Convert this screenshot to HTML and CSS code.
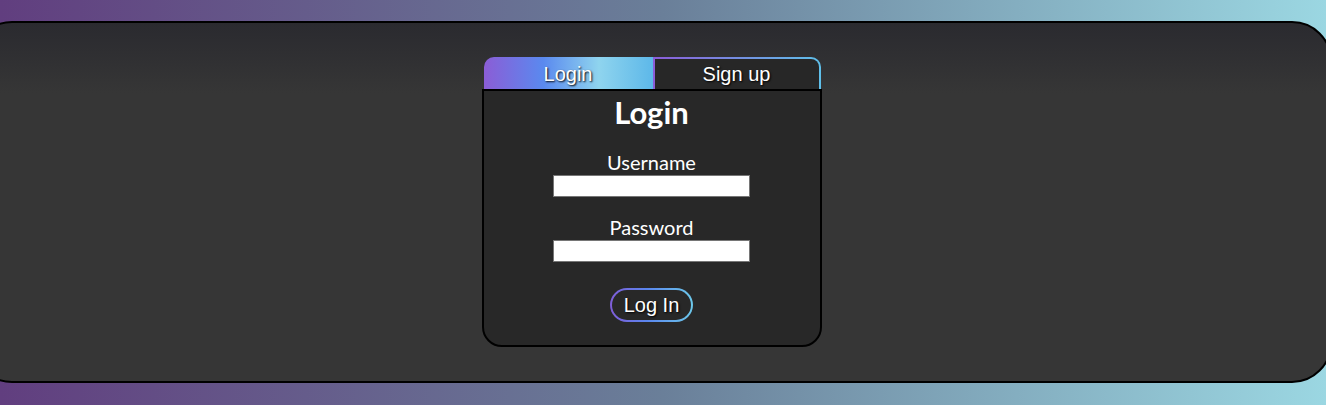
FILE: index.html
```html
<!DOCTYPE html>
<html lang="en">
<head>
    <meta charset="UTF-8">
    <meta name="viewport" content="width=device-width, initial-scale=1.0">
    <title>Login</title>
    <link rel="stylesheet" href="styles.css">
</head>
<body>
    <div class="page">
        <div class="auth">
            <div class="tabs">
                <button class="tab tab-active">Login</button>
                <button class="tab tab-other">Sign up</button>
            </div>
            <form class="card">
                <h1>Login</h1>
                <label for="username">Username</label>
                <input type="text" id="username">
                <label for="password" class="second">Password</label>
                <input type="password" id="password">
                <button type="button" class="submit">Log In</button>
            </form>
        </div>
    </div>
</body>
</html>
```

FILE: styles.css
```css
body {
    margin: 0;
    height: 405px;
    overflow: hidden;
    background: linear-gradient(to right, #613e7f, #6a7f99 50%, #9bd7e2);
    font-family: "Liberation Sans", Arial, sans-serif;
}
.page {
    box-sizing: border-box;
    width: 1360px;
    height: 362px;
    margin: 21px 0 0 -28px;
    border: 2px solid #000;
    border-radius: 40px;
    background: linear-gradient(#2a2a2f, #363636 70px);
    display: flex;
    justify-content: center;
    padding-top: 34px;
}
.auth {
    width: 340px;
    margin-left: -1px;
}
.tabs {
    display: flex;
    margin: 0 1px 0 2px;
}
.tab {
    box-sizing: border-box;
    height: 32px;
    font-family: "Liberation Sans", Arial, sans-serif;
    font-size: 20px;
    color: #fff;
    text-shadow: 1px 1px 2px #000;
    padding: 0;
    cursor: pointer;
}
.tab-active {
    width: 169px;
    border: none;
    border-radius: 10px 0 0 0;
    background: linear-gradient(to right, #8b5dd6, #5a89ef 35%, #8fd4ee 68%, #5db8e9);
    padding-top: 2px;
}
.tab-other {
    width: 168px;
    border: 2px solid transparent;
    border-bottom: none;
    border-radius: 0 10px 0 0;
    background: linear-gradient(#272727, #272727) padding-box,
                linear-gradient(to right, #8a5cd8, #5fc0ea) border-box;
}
.card {
    box-sizing: border-box;
    height: 258px;
    border: 2px solid #000;
    border-radius: 0 0 20px 20px;
    background-color: #282828;
    display: flex;
    flex-direction: column;
    align-items: center;
    color: #fff;
    font-family: Lato, "Noto Sans", sans-serif;
}
.card h1 {
    margin: 5px 0 0;
    font-size: 31px;
    line-height: 32px;
    font-weight: 700;
}
.card label {
    margin-top: 24px;
    font-size: 20px;
    line-height: 20px;
}
.card label.second {
    margin-top: 20px;
}
.card input {
    box-sizing: border-box;
    width: 197px;
    height: 22px;
    margin-top: 3px;
    border: 1px solid #767676;
    background-color: #fff;
}
.submit {
    box-sizing: border-box;
    margin-top: 26px;
    height: 34px;
    width: 83px;
    border: 2px solid transparent;
    border-radius: 17px;
    background: linear-gradient(#282828, #282828) padding-box,
                linear-gradient(to right, #7f5dd8, #5a86ee 45%, #6cc8ea) border-box;
    color: #fff;
    font-family: "Liberation Sans", Arial, sans-serif;
    font-size: 20px;
    text-shadow: 1px 1px 2px #000;
    cursor: pointer;
}
```
